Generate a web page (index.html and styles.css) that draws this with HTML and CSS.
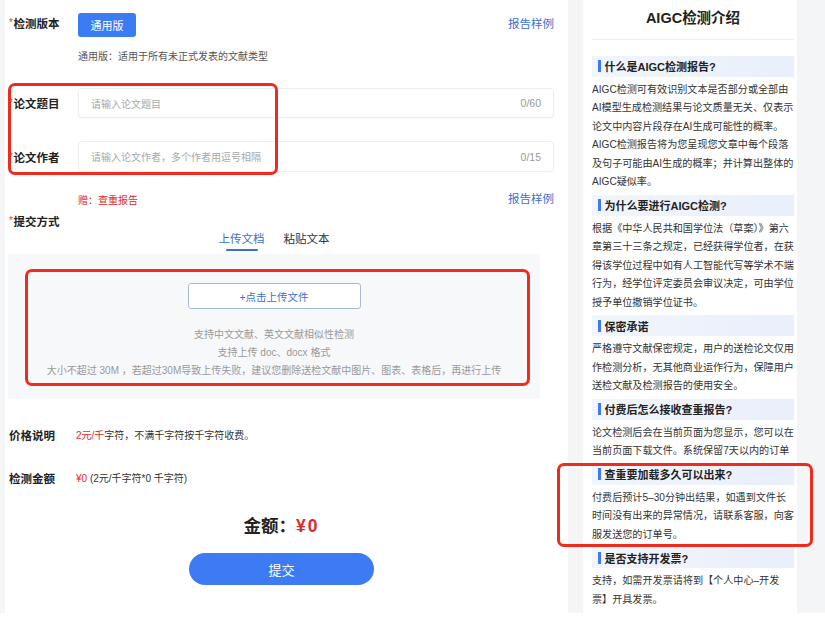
FILE: index.html
```html
<!DOCTYPE html>
<html lang="zh-CN">
<head>
    <meta charset="UTF-8">
    <meta name="viewport" content="width=device-width, initial-scale=1.0">
    <title>AIGC检测</title>
    <link rel="stylesheet" href="styles.css">
</head>
<body>

<div class="page">
    <!-- 左侧表单 -->
    <div class="main">
        <div class="row row-version">
            <div class="label"><span class="req">*</span>检测版本</div>
            <button class="btn-version">通用版</button>
            <a class="sample-link">报告样例</a>
        </div>
        <div class="version-desc">通用版：适用于所有未正式发表的文献类型</div>

        <div class="row row-input">
            <div class="label"><span class="req">*</span>论文题目</div>
            <div class="input-box">
                <span>请输入论文题目</span>
                <span class="counter">0/60</span>
            </div>
        </div>
        <div class="row row-input row-input-2">
            <div class="label"><span class="req">*</span>论文作者</div>
            <div class="input-box">
                <span>请输入论文作者，多个作者用逗号相隔</span>
                <span class="counter">0/15</span>
            </div>
        </div>

        <div class="row row-gift">
            <div class="gift">赠：查重报告</div>
            <a class="sample-link">报告样例</a>
        </div>

        <div class="label submit-label"><span class="req">*</span>提交方式</div>
        <div class="tabs">
            <div class="tab active">上传文档</div>
            <div class="tab">粘贴文本</div>
        </div>
        <div class="upload">
            <button class="btn-upload">+点击上传文件</button>
            <div class="upload-tips">
                <div>支持中文文献、英文文献相似性检测</div>
                <div>支持上传 doc、docx 格式</div>
                <div>大小不超过 30M ，若超过30M导致上传失败，建议您删除送检文献中图片、图表、表格后，再进行上传</div>
            </div>
        </div>

        <div class="row row-price">
            <div class="label">价格说明</div>
            <div class="price-text"><span class="red">2元/千</span>字符，不满千字符按千字符收费。</div>
        </div>
        <div class="row row-amount">
            <div class="label">检测金额</div>
            <div class="price-text"><span class="red">¥0</span> (2元/千字符*0 千字符)</div>
        </div>

        <div class="total">金额：<span class="red total-num">¥0</span></div>
        <button class="btn-submit">提交</button>
    </div>

    <!-- 右侧介绍 -->
    <div class="side">
        <div class="side-title">AIGC检测介绍</div>

        <div class="faq-title first">什么是AIGC检测报告?</div>
        <div class="faq-text">AIGC检测可有效识别文本是否部分或全部由AI模型生成检测结果与论文质量无关、仅表示论文中内容片段存在AI生成可能性的概率。AIGC检测报告将为您呈现您文章中每个段落及句子可能由AI生成的概率；并计算出整体的AIGC疑似率。</div>

        <div class="faq-title">为什么要进行AIGC检测?</div>
        <div class="faq-text">根据《中华人民共和国学位法（草案）》第六章第三十三条之规定，已经获得学位者，在获得该学位过程中如有人工智能代写等学术不端行为，经学位评定委员会审议决定，可由学位授予单位撤销学位证书。</div>

        <div class="faq-title">保密承诺</div>
        <div class="faq-text">严格遵守文献保密规定，用户的送检论文仅用作检测分析，无其他商业运作行为，保障用户送检文献及检测报告的使用安全。</div>

        <div class="faq-title">付费后怎么接收查重报告?</div>
        <div class="faq-text">论文检测后会在当前页面为您显示，您可以在当前页面下载文件。系统保留7天以内的订单</div>

        <div class="faq-title">查重要加载多久可以出来?</div>
        <div class="faq-text">付费后预计5–30分钟出结果，如遇到文件长时间没有出来的异常情况，请联系客服，向客服发送您的订单号。</div>

        <div class="faq-title">是否支持开发票?</div>
        <div class="faq-text">支持，如需开发票请将到【个人中心–开发票】开具发票。</div>
    </div>

    <!-- 红色标注框 -->
    <div class="mark mark-1"></div>
    <div class="mark mark-2"></div>
    <div class="mark mark-3"></div>
</div>

</body>
</html>
```

FILE: styles.css
```css
body {
    margin: 0;
    font-family: "Liberation Sans", "Noto Sans CJK SC", sans-serif;
    color: #333;
    background-color: #fff;
}
.page {
    position: relative;
    display: flex;
    gap: 15px;
    height: 613px;
    padding-left: 5px;
    background-color: #f4f5f7;
}
.main {
    width: 563px;
    padding: 13px 14px 0 4px;
    box-sizing: border-box;
    background-color: #fff;
}
.row {
    display: flex;
    align-items: center;
}
.label {
    width: 69px;
    flex: none;
    font-size: 11.5px;
    font-weight: bold;
    color: #222;
}
.req {
    color: #e53a32;
    font-size: 10px;
    font-weight: normal;
    vertical-align: 2px;
    margin-right: 0.5px;
}
.red {
    color: #e0282c;
}
.row-version {
    align-items: flex-start;
}
.row-version .label {
    line-height: 20px;
}
.btn-version {
    width: 58px;
    height: 24px;
    border: none;
    border-radius: 3px;
    background-color: #3b7cf5;
    color: #fff;
    font-family: inherit;
    font-size: 11px;
}
.sample-link {
    margin-left: auto;
    font-size: 11.5px;
    line-height: 22px;
    color: #3a6fd4;
}
.version-desc {
    margin: 13px 0 0 69px;
    font-size: 10px;
    line-height: 14px;
    color: #555;
}
.row-input {
    margin-top: 24px;
}
.row-input-2 {
    margin-top: 23px;
}
.input-box {
    flex: 1;
    height: 30px;
    display: flex;
    align-items: center;
    justify-content: space-between;
    padding: 0 12px;
    box-sizing: border-box;
    border: 1px solid #ededed;
    border-radius: 4px;
    box-shadow: 0 1px 2px rgba(0, 0, 0, 0.03);
    font-size: 10px;
    color: #a8a8a8;
}
.row-input-2 .input-box {
    height: 31px;
}
.counter {
    font-size: 10.5px;
    color: #999;
}
.row-gift {
    margin-top: 20px;
    height: 14px;
}
.gift {
    margin-left: 69px;
    font-size: 10px;
    color: #e0282c;
}
.row-gift .sample-link {
    line-height: 14px;
}
.submit-label {
    margin-top: 7px;
    line-height: 16px;
}
.tabs {
    display: flex;
    justify-content: center;
    gap: 19px;
    width: 532px;
    margin: 1px 0 0 -1px;
}
.tab {
    position: relative;
    padding-bottom: 4px;
    font-size: 11.5px;
    line-height: 16px;
    color: #333;
}
.tab.active {
    color: #3a6fd4;
}
.tab.active::after {
    content: "";
    position: absolute;
    left: 50%;
    bottom: 0;
    width: 32px;
    height: 2px;
    margin-left: -16px;
    background-color: #3a6fd4;
    border-radius: 1px;
}
.upload {
    width: 532px;
    height: 145px;
    margin: 3px 0 0 -1px;
    padding-top: 29px;
    box-sizing: border-box;
    background-color: #f7f8fa;
    text-align: center;
}
.btn-upload {
    width: 173px;
    height: 26px;
    border: 1px solid #a9b8d6;
    border-radius: 3px;
    background-color: #fff;
    color: #3a6fd4;
    font-family: inherit;
    font-size: 10.5px;
}
.upload-tips {
    margin-top: 17px;
    font-size: 10px;
    line-height: 18px;
    color: #999;
}
.row-price {
    margin-top: 29px;
    line-height: 16px;
}
.row-amount {
    margin-top: 27px;
    line-height: 16px;
}
.row-price .label,
.row-amount .label {
    width: 67px;
}
.price-text {
    font-size: 10px;
    color: #333;
}
.total {
    margin-top: 27px;
    text-align: center;
    font-size: 17.5px;
    font-weight: bold;
    line-height: 24px;
    color: #222;
}
.total-num {
    letter-spacing: 2px;
}
.btn-submit {
    display: block;
    width: 185px;
    height: 32px;
    margin: 15px auto 0;
    border: none;
    border-radius: 16px;
    background-color: #3d7bf5;
    color: #fff;
    font-family: inherit;
    font-size: 13px;
}
.side {
    width: 214px;
    padding: 7px 3px 0 9px;
    box-sizing: border-box;
    background-color: #fff;
}
.side-title {
    padding-bottom: 10px;
    border-bottom: 1px solid #eee;
    text-align: center;
    font-size: 14.5px;
    font-weight: bold;
    line-height: 22px;
    color: #222;
}
.faq-title {
    display: flex;
    align-items: center;
    gap: 4px;
    height: 21px;
    padding-left: 6px;
    background: linear-gradient(to right, #f1f5fc, #e9effb);
    font-size: 11px;
    font-weight: bold;
    color: #222;
}
.faq-title::before {
    content: "";
    width: 2.5px;
    height: 12px;
    background-color: #3d7af0;
}
.faq-title.first {
    margin-top: 15.5px;
}
.faq-text {
    width: 202px;
    margin: 4px 0 3px;
    font-size: 10.1px;
    line-height: 18.5px;
    color: #333;
}
.mark {
    position: absolute;
    border: 3.5px solid #ee2b1d;
    border-radius: 7px;
    box-sizing: border-box;
}
.mark-1 {
    left: 8px;
    top: 83px;
    width: 270px;
    height: 92px;
}
.mark-2 {
    left: 25px;
    top: 269px;
    width: 505px;
    height: 117px;
}
.mark-3 {
    left: 557px;
    top: 463px;
    width: 256px;
    height: 84px;
}
```
